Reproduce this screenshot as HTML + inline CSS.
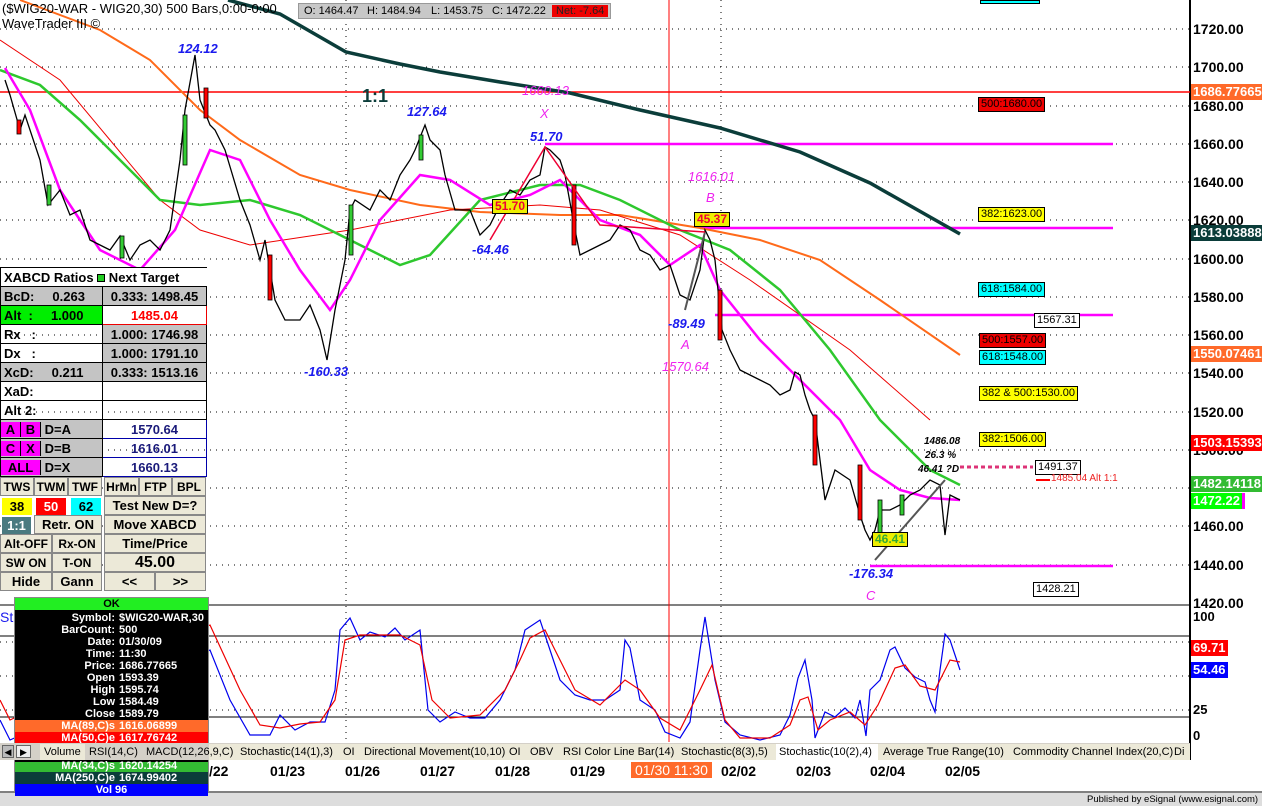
<!DOCTYPE html>
<html><head><meta charset="utf-8"><style>
*{margin:0;padding:0;box-sizing:border-box}
body{width:1262px;height:806px;position:relative;overflow:hidden;background:#fff;font-family:"Liberation Sans",sans-serif}
.a{position:absolute;white-space:nowrap}
.ax{position:absolute;left:1193px;font-size:14px;font-weight:bold;color:#000}
.cb{position:absolute;left:1191px;font-size:13px;font-weight:bold;color:#fff;padding:0 2px;height:16px;line-height:16px}
.bx{position:absolute;font-size:11px;border:1px solid #000;height:15px;line-height:13px;padding:0 2px}
.lt{font-size:13px;font-style:italic;font-weight:bold;color:#1a1aee;position:absolute}
.mg{font-size:13px;font-style:italic;color:#ee22ee;position:absolute}
table{border-collapse:collapse}
#lp td{border:1px solid #000;height:19px;font-size:13px;font-weight:bold;padding:0 3px}
.g{background:#c4c4c4}
.btn{position:absolute;background:#ece9d8;border:1px solid #888;font-size:13px;font-weight:bold;text-align:center;height:19px;line-height:18px;overflow:hidden}
#info div{height:12px;line-height:12px;font-size:11px;font-weight:bold;color:#fff}
#info .r span{display:inline-block;width:104px;text-align:right;padding-right:4px}
.tab{position:absolute;top:744px;height:16px;font-size:11px;line-height:16px;z-index:5}
.dt{position:absolute;top:763px;font-size:14px;font-weight:bold}
</style></head><body>
<svg class="a" style="left:0;top:0" width="1262" height="806">
<g stroke="#000" stroke-dasharray="1 5" stroke-width="1">
<line x1="0" y1="29" x2="1190" y2="29"/><line x1="0" y1="67" x2="1190" y2="67"/><line x1="0" y1="106" x2="1190" y2="106"/><line x1="0" y1="144" x2="1190" y2="144"/><line x1="0" y1="182" x2="1190" y2="182"/><line x1="0" y1="220" x2="1190" y2="220"/><line x1="0" y1="259" x2="1190" y2="259"/><line x1="0" y1="297" x2="1190" y2="297"/><line x1="0" y1="335" x2="1190" y2="335"/><line x1="0" y1="373" x2="1190" y2="373"/><line x1="0" y1="412" x2="1190" y2="412"/><line x1="0" y1="450" x2="1190" y2="450"/><line x1="0" y1="488" x2="1190" y2="488"/><line x1="0" y1="526" x2="1190" y2="526"/><line x1="0" y1="565" x2="1190" y2="565"/>
<line x1="0" y1="642" x2="1190" y2="642"/><line x1="0" y1="676" x2="1190" y2="676"/><line x1="0" y1="710" x2="1190" y2="710"/>
<line x1="346" y1="0" x2="346" y2="742"/><line x1="721" y1="0" x2="721" y2="742"/>
</g>
<line x1="1190" y1="0" x2="1190" y2="760" stroke="#000" stroke-width="2"/>
<line x1="0" y1="605" x2="1190" y2="605" stroke="#000"/>
<line x1="0" y1="636" x2="1190" y2="636" stroke="#000"/>
<line x1="0" y1="717" x2="1190" y2="717" stroke="#000"/>
<line x1="0" y1="92" x2="1190" y2="92" stroke="#f00" stroke-width="1.5"/>
<line x1="669" y1="0" x2="669" y2="742" stroke="#f00"/>
<g stroke="#f0f" stroke-width="2.5">
<line x1="545" y1="144" x2="1113" y2="144"/><line x1="700" y1="228" x2="1113" y2="228"/><line x1="715" y1="315" x2="1113" y2="315"/><line x1="870" y1="566" x2="1113" y2="566"/>
</g>
<line x1="960" y1="467" x2="1033" y2="467" stroke="#dd3377" stroke-width="3" stroke-dasharray="4 3"/>
<line x1="1036" y1="480" x2="1050" y2="480" stroke="#f00" stroke-width="2"/>
<polyline fill="none" stroke="#0b3d3a" stroke-width="3.5" points="228,0 280,14 346,52 400,64 440,72 500,82 570,93 640,110 720,128 800,152 870,183 960,234"/>
<polyline fill="none" stroke="#ff6a1a" stroke-width="2" points="20,0 100,30 150,60 200,110 240,140 300,175 350,190 420,205 480,212 560,215 620,215 700,228 760,240 820,260 880,300 960,355"/>
<polyline fill="none" stroke="#e00" stroke-width="1" points="0,40 60,80 110,140 160,200 200,230 250,245 350,230 450,210 540,205 600,210 680,235 750,280 850,350 930,420"/>
<polyline fill="none" stroke="#2ec82e" stroke-width="2.5" points="0,70 40,85 80,120 120,160 160,200 200,205 250,200 300,215 350,240 400,265 430,255 480,200 540,185 580,185 620,200 680,230 730,250 780,290 830,350 880,420 930,470 960,485"/>
<polyline fill="none" stroke="#f0f" stroke-width="2.5" points="5,68 30,110 60,190 100,250 140,270 175,230 210,150 240,160 270,220 300,270 330,310 350,280 380,220 420,175 450,180 490,205 530,195 560,180 600,220 640,235 670,265 700,245 720,290 760,340 800,380 840,420 870,470 900,490 930,498 960,500"/>
<polyline fill="none" stroke="#000" stroke-width="1.3" points="5,80 10,95 20,130 25,115 40,160 48,205 60,190 70,215 80,210 90,240 110,250 120,236 130,260 140,245 150,240 160,250 170,230 180,160 185,110 195,55 200,100 210,125 215,130 225,150 240,200 250,225 260,260 265,240 275,300 285,320 300,320 310,305 320,330 327,360 335,310 345,260 350,210 355,200 370,210 380,190 390,200 400,175 410,160 415,150 425,125 430,140 440,150 445,175 455,210 470,210 480,235 490,225 500,205 510,190 520,195 530,180 540,175 545,147 550,150 560,160 565,175 575,230 580,255 590,250 600,245 610,240 620,225 630,230 640,250 650,255 660,270 670,265 680,295 690,300 700,270 705,230 710,240 715,260 722,330 730,350 740,370 750,375 760,380 770,385 780,395 790,390 795,372 800,375 805,395 810,410 815,420 820,460 825,500 835,470 850,480 860,515 865,530 870,540 875,530 880,510 890,510 900,505 910,495 920,490 930,480 940,485 945,535 950,495 960,500"/>
<g stroke="#000" stroke-width="0.8">
<rect x="17" y="120" width="4" height="14" fill="#f00"/><rect x="47" y="185" width="4" height="20" fill="#3c3"/><rect x="120" y="236" width="4" height="22" fill="#3c3"/><rect x="183" y="115" width="4" height="50" fill="#3c3"/><rect x="204" y="88" width="4" height="30" fill="#f00"/><rect x="268" y="255" width="4" height="45" fill="#f00"/><rect x="349" y="205" width="4" height="50" fill="#3c3"/><rect x="419" y="135" width="4" height="25" fill="#3c3"/><rect x="572" y="185" width="4" height="60" fill="#f00"/><rect x="718" y="290" width="4" height="50" fill="#f00"/><rect x="813" y="415" width="4" height="50" fill="#f00"/><rect x="858" y="465" width="4" height="55" fill="#f00"/><rect x="878" y="500" width="4" height="35" fill="#3c3"/><rect x="900" y="495" width="4" height="20" fill="#3c3"/>
</g>
<polyline fill="none" stroke="#555" stroke-width="2" points="685,310 705,232"/>
<polyline fill="none" stroke="#555" stroke-width="2" points="875,560 945,480"/>
<polyline fill="none" stroke="#e03" stroke-width="1.5" points="490,240 545,147 600,225 705,232"/>
<polyline fill="none" stroke="#0000ee" stroke-width="1.2" points="0,720 10,740 210,650 230,700 250,735 270,735 280,715 295,730 310,722 325,722 335,690 340,630 350,618 360,640 370,632 385,637 395,628 405,640 420,630 428,710 440,722 455,712 470,718 485,718 500,700 515,670 525,630 540,620 550,650 560,680 575,695 590,700 605,700 620,690 625,640 630,648 640,700 655,710 665,732 680,738 690,722 700,650 705,617 715,680 725,722 740,735 760,740 780,735 790,715 798,678 805,660 812,700 815,738 825,712 835,717 845,708 855,718 860,700 866,736 870,690 880,680 890,650 895,647 905,668 915,677 925,682 930,700 935,712 940,670 945,634 950,640 955,655 960,670"/>
<polyline fill="none" stroke="#e00" stroke-width="1.2" points="0,700 10,720 210,625 240,690 260,725 280,728 300,724 320,722 335,700 345,640 360,635 400,635 420,645 432,700 450,718 480,715 505,690 520,660 530,638 545,630 560,660 575,690 600,705 625,680 640,690 660,718 680,730 700,690 712,665 725,720 740,738 770,738 790,725 800,700 808,697 818,730 830,720 850,712 865,725 878,705 895,668 905,665 920,686 935,690 950,660 960,662"/>
<line x1="0" y1="792" x2="1262" y2="792" stroke="#000"/>
<rect x="0" y="793" width="1262" height="13" fill="#ddd"/>
</svg>

<div class="a" style="left:2px;top:1px;font-size:13px">($WIG20-WAR - WIG20,30) 500 Bars,0:00-0:00</div>
<div class="a" style="left:2px;top:16px;font-size:13px">WaveTrader III ©</div>
<div class="a" style="left:298px;top:3px;width:313px;height:16px;background:#c8c8c8;border:1px solid #999;font-size:11px;line-height:14px">
<span class="a" style="left:5px">O: 1464.47</span><span class="a" style="left:68px">H: 1484.94</span><span class="a" style="left:132px">L: 1453.75</span><span class="a" style="left:193px">C: 1472.22</span>
<span class="a" style="left:253px;top:1px;width:56px;height:12px;background:#e00;color:#222;padding-left:4px;line-height:12px">Net: -7.64</span></div>
<div class="a" style="left:980px;top:0;width:60px;height:4px;background:#0ff;border:1px solid #000"></div>

<div class="a" style="left:362px;top:86px;font-size:18px;font-weight:bold;color:#0b3d3a">1:1</div>
<div class="lt" style="left:178px;top:41px">124.12</div>
<div class="lt" style="left:407px;top:104px">127.64</div>
<div class="lt" style="left:530px;top:129px">51.70</div>
<div class="lt" style="left:472px;top:242px">-64.46</div>
<div class="lt" style="left:304px;top:364px">-160.33</div>
<div class="lt" style="left:668px;top:316px">-89.49</div>
<div class="lt" style="left:849px;top:566px">-176.34</div>
<div class="mg" style="left:522px;top:83px">1660.13</div>
<div class="mg" style="left:540px;top:106px">X</div>
<div class="mg" style="left:688px;top:169px">1616.01</div>
<div class="mg" style="left:706px;top:190px">B</div>
<div class="mg" style="left:681px;top:337px">A</div>
<div class="mg" style="left:662px;top:359px">1570.64</div>
<div class="mg" style="left:866px;top:588px">C</div>
<div class="a" style="left:924px;top:436px;font-size:10px;font-style:italic;font-weight:bold">1486.08</div>
<div class="a" style="left:925px;top:450px;font-size:10px;font-style:italic;font-weight:bold">26.3 %</div>
<div class="a" style="left:918px;top:464px;font-size:10px;font-style:italic;font-weight:bold">46.41 ?D</div>
<div class="bx" style="left:492px;top:199px;background:#ee0;color:#e03;font-weight:bold;font-size:12px">51.70</div>
<div class="bx" style="left:694px;top:212px;background:#ee0;color:#e03;font-weight:bold;font-size:12px">45.37</div>
<div class="bx" style="left:872px;top:532px;background:#ee0;color:#3a3;font-weight:bold;font-size:12px">46.41</div>

<div class="bx" style="left:978px;top:97px;background:#e00">500:1680.00</div>
<div class="bx" style="left:978px;top:207px;background:#ff0">382:1623.00</div>
<div class="bx" style="left:978px;top:282px;background:#0ff">618:1584.00</div>
<div class="bx" style="left:1034px;top:313px;background:#fff">1567.31</div>
<div class="bx" style="left:979px;top:333px;background:#e00">500:1557.00</div>
<div class="bx" style="left:979px;top:350px;background:#0ff">618:1548.00</div>
<div class="bx" style="left:979px;top:386px;background:#ff0">382 &amp; 500:1530.00</div>
<div class="bx" style="left:979px;top:432px;background:#ff0">382:1506.00</div>
<div class="bx" style="left:1035px;top:460px;background:#fff">1491.37</div>
<div class="a" style="left:1051px;top:473px;font-size:10px;color:#e22">1485.04 Alt 1:1</div>
<div class="bx" style="left:1033px;top:582px;background:#fff">1428.21</div>

<div class="ax" style="top:21px">1720.00</div><div class="ax" style="top:59px">1700.00</div><div class="ax" style="top:98px">1680.00</div><div class="ax" style="top:136px">1660.00</div><div class="ax" style="top:174px">1640.00</div><div class="ax" style="top:212px">1620.00</div><div class="ax" style="top:251px">1600.00</div><div class="ax" style="top:289px">1580.00</div><div class="ax" style="top:327px">1560.00</div><div class="ax" style="top:365px">1540.00</div><div class="ax" style="top:404px">1520.00</div><div class="ax" style="top:442px">1500.00</div><div class="ax" style="top:518px">1460.00</div><div class="ax" style="top:557px">1440.00</div><div class="ax" style="top:595px">1420.00</div>
<div class="cb" style="top:84px;background:#ff6a2a">1686.77665</div>
<div class="cb" style="top:225px;background:#0b3d3a">1613.03888</div>
<div class="cb" style="top:346px;background:#ff6a2a">1550.07461</div>
<div class="cb" style="top:435px;background:#f00">1503.15393</div>
<div class="cb" style="top:476px;background:#33bb33">1482.14118</div>
<div class="cb" style="top:493px;background:#f0f;width:54px"></div>
<div class="cb" style="top:493px;background:#0f0">1472.22</div>
<div class="ax" style="top:609px;font-size:13px">100</div>
<div class="ax" style="top:702px;font-size:13px">25</div>
<div class="ax" style="top:728px;font-size:13px">0</div>
<div class="cb" style="top:640px;background:#f00">69.71</div>
<div class="cb" style="top:662px;background:#00f">54.46</div>
<div class="a" style="left:0;top:609px;font-size:14px;color:#1a1aee">St</div>

<table id="lp" class="a" style="left:0;top:267px;width:207px">
<tr><td colspan="2" style="background:#fff;border-right:0">XABCD Ratios <span style="display:inline-block;width:8px;height:8px;background:#2c2;border:1px solid #000"></span> Next Target</td></tr>
<tr><td class="g" style="width:102px">BcD: &nbsp; &nbsp; 0.263</td><td class="g" style="text-align:center">0.333: 1498.45</td></tr>
<tr><td style="background:#0e0">Alt &nbsp;: &nbsp; &nbsp; 1.000</td><td style="text-align:center;color:#f00;border:1px solid #e00">1485.04</td></tr>
<tr><td>Rx &nbsp; :</td><td class="g" style="text-align:center">1.000: 1746.98</td></tr>
<tr><td>Dx &nbsp; :</td><td class="g" style="text-align:center">1.000: 1791.10</td></tr>
<tr><td class="g">XcD: &nbsp; &nbsp; 0.211</td><td class="g" style="text-align:center">0.333: 1513.16</td></tr>
<tr><td>XaD:</td><td></td></tr>
<tr><td>Alt 2:</td><td></td></tr>
<tr><td class="g" style="padding:0"><span style="display:inline-block;width:20px;background:#f0f;border-right:1px solid #000;text-align:center">A</span><span style="display:inline-block;width:20px;background:#f0f;border-right:1px solid #000;text-align:center">B</span> D=A</td><td style="text-align:center;color:#1a1a7a;border-color:#00a">1570.64</td></tr>
<tr><td class="g" style="padding:0"><span style="display:inline-block;width:20px;background:#f0f;border-right:1px solid #000;text-align:center">C</span><span style="display:inline-block;width:20px;background:#f0f;border-right:1px solid #000;text-align:center">X</span> D=B</td><td style="text-align:center;color:#1a1a7a;border-color:#00a">1616.01</td></tr>
<tr><td class="g" style="padding:0"><span style="display:inline-block;width:40px;background:#f0f;border-right:1px solid #000;text-align:center">ALL</span> D=X</td><td style="text-align:center;color:#1a1a7a;border-color:#00a">1660.13</td></tr>
</table>
<div class="btn" style="left:0;top:477px;width:34px;font-size:12px">TWS</div><div class="btn" style="left:34px;top:477px;width:34px;font-size:12px">TWM</div><div class="btn" style="left:68px;top:477px;width:34px;font-size:12px">TWF</div><div class="btn" style="left:104px;top:477px;width:35px;font-size:12px">HrMn</div><div class="btn" style="left:139px;top:477px;width:33px;font-size:12px">FTP</div><div class="btn" style="left:172px;top:477px;width:34px;font-size:12px">BPL</div>
<div class="btn" style="left:1px;top:497px;width:32px;background:#ff0;border-color:#fff">38</div><div class="btn" style="left:35px;top:497px;width:32px;background:#f00;color:#fff;border-color:#fff">50</div><div class="btn" style="left:70px;top:497px;width:32px;background:#0ff;border-color:#fff">62</div><div class="btn" style="left:104px;top:496px;width:102px">Test New D=?</div>
<div class="btn" style="left:1px;top:516px;width:31px;background:#4a7a80;color:#fff;border-color:#fff">1:1</div><div class="btn" style="left:34px;top:515px;width:68px">Retr. ON</div><div class="btn" style="left:104px;top:515px;width:102px">Move XABCD</div>
<div class="btn" style="left:0;top:534px;width:52px;font-size:12px">Alt-OFF</div><div class="btn" style="left:52px;top:534px;width:50px;font-size:12px">Rx-ON</div><div class="btn" style="left:104px;top:534px;width:102px">Time/Price</div>
<div class="btn" style="left:0;top:553px;width:52px;font-size:12px">SW ON</div><div class="btn" style="left:52px;top:553px;width:50px;font-size:12px">T-ON</div><div class="btn" style="left:104px;top:553px;width:102px;font-size:16px">45.00</div>
<div class="btn" style="left:0;top:572px;width:52px">Hide</div><div class="btn" style="left:52px;top:572px;width:50px">Gann</div><div class="btn" style="left:104px;top:572px;width:51px">&lt;&lt;</div><div class="btn" style="left:155px;top:572px;width:51px">&gt;&gt;</div>

<div id="info" class="a" style="left:14px;top:597px;width:195px;height:195px;background:#000;border:1px solid #888">
<div style="background:#2e2;color:#000;text-align:center">OK</div>
<div class="r" style="margin-top:2px"><span>Symbol:</span>$WIG20-WAR,30</div>
<div class="r"><span>BarCount:</span>500</div>
<div class="r"><span>Date:</span>01/30/09</div>
<div class="r"><span>Time:</span>11:30</div>
<div class="r"><span>Price:</span>1686.77665</div>
<div class="r"><span>Open</span>1593.39</div>
<div class="r"><span>High</span>1595.74</div>
<div class="r"><span>Low</span>1584.49</div>
<div class="r"><span>Close</span>1589.79</div>
<div class="r" style="background:#ff6a2a"><span>MA(89,C)s</span>1616.06899</div>
<div class="r" style="background:#f00"><span>MA(50,C)e</span>1617.76742</div>
<div style="height:18px"></div>
<div class="r" style="background:#33bb33;height:10px;line-height:8px"><span>MA(34,C)s</span>1620.14254</div>
<div class="r" style="background:#0b3d3a"><span>MA(250,C)e</span>1674.99402</div>
<div style="background:#00f;text-align:center">Vol 96</div>
</div>

<div class="a" style="left:0;top:743px;width:1190px;height:17px;background:#d4d0c8;z-index:4"></div>
<div class="a" style="left:2px;top:745px;width:12px;height:13px;background:#bbb;border:1px solid #666;font-size:9px;text-align:center;line-height:12px;z-index:5">◀</div>
<div class="a" style="left:16px;top:745px;width:15px;height:13px;background:#eee;border:1px solid #666;font-size:9px;text-align:center;line-height:12px;z-index:5">▶</div>
<div class="tab" style="left:209px;width:981px;background:#ece9d8"></div>
<div class="tab" style="left:40px;width:45px;background:#ece9d8;padding-left:4px">Volume</div>
<div class="tab" style="left:89px">RSI(14,C)</div>
<div class="tab" style="left:146px">MACD(12,26,9,C)</div>
<div class="tab" style="left:240px">Stochastic(14(1),3)</div>
<div class="tab" style="left:343px">OI</div>
<div class="tab" style="left:364px">Directional Movement(10,10)</div>
<div class="tab" style="left:509px">OI</div>
<div class="tab" style="left:530px">OBV</div>
<div class="tab" style="left:563px">RSI Color Line Bar(14)</div>
<div class="tab" style="left:681px">Stochastic(8(3),5)</div>
<div class="tab" style="left:776px;width:102px;background:#fff;padding-left:3px">Stochastic(10(2),4)</div>
<div class="tab" style="left:883px">Average True Range(10)</div>
<div class="tab" style="left:1013px">Commodity Channel Index(20,C)</div>
<div class="tab" style="left:1174px">Di</div>

<div class="dt" style="left:209px">/22</div>
<div class="dt" style="left:270px">01/23</div>
<div class="dt" style="left:345px">01/26</div>
<div class="dt" style="left:420px">01/27</div>
<div class="dt" style="left:495px">01/28</div>
<div class="dt" style="left:570px">01/29</div>
<div class="dt" style="left:631px;top:762px;background:#ff6a2a;color:#fff;padding:0 4px;font-weight:normal">01/30 11:30</div>
<div class="dt" style="left:721px">02/02</div>
<div class="dt" style="left:796px">02/03</div>
<div class="dt" style="left:870px">02/04</div>
<div class="dt" style="left:945px">02/05</div>
<div class="a" style="left:1087px;top:794px;font-size:9.5px">Published by eSignal (www.esignal.com)</div>
</body></html>
